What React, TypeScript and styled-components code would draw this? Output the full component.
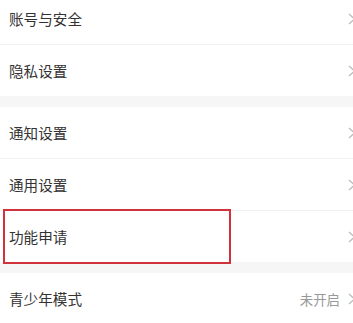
import React from "react";
import styled, { createGlobalStyle } from "styled-components";

const Global = createGlobalStyle`
  html, body { margin: 0; padding: 0; background: #ffffff; }
  body { overflow: hidden; font-family: "Noto Sans CJK SC", "Noto Sans", sans-serif; }
`;

const Page = styled.div`
  width: 353px;
  height: 323px;
  overflow: hidden;
  background: #ffffff;
  display: flex;
  flex-direction: column;
`;

const Group = styled.div<{ $offset?: number }>`
  display: flex;
  flex-direction: column;
  margin-top: ${(p) => p.$offset ?? 0}px;
`;

const Gap = styled.div`
  height: 11px;
  background: #f6f6f6;
  flex: none;
`;

const Row = styled.div<{ $last?: boolean; $highlight?: boolean }>`
  position: relative;
  height: 51px;
  flex: none;
  display: flex;
  align-items: center;
  padding-left: 9px;
  border-bottom: ${(p) => (p.$last ? "none" : "1px solid #f1f1f1")};
  ${(p) =>
    p.$highlight
      ? `&::after {
          content: "";
          position: absolute;
          left: 3px;
          top: -2px;
          width: 224px;
          height: 51px;
          border: 2px solid #d2323c;
          pointer-events: none;
        }`
      : ""}
`;

const Label = styled.span`
  font-size: 14.6px;
  color: #333333;
  letter-spacing: 0;
  flex: 1;
`;

const Value = styled.span`
  font-size: 13.4px;
  color: #999999;
  margin-right: 8px;
`;

const Chevron = styled.svg`
  flex: none;
  width: 8px;
  height: 12px;
  margin-right: -3px;
`;

const Arrow = () => (
  <Chevron viewBox="0 0 8 12">
    <path d="M1 1 L6.5 6 L1 11" fill="none" stroke="#bbbbbb" strokeWidth="1.3" />
  </Chevron>
);

type Item = { label: string; value?: string; highlight?: boolean };

const groups: Item[][] = [
  [{ label: "账号与安全" }, { label: "隐私设置" }],
  [{ label: "通知设置" }, { label: "通用设置" }, { label: "功能申请", highlight: true }],
  [{ label: "青少年模式", value: "未开启" }],
];

export default function App() {
  return (
    <Page>
      <Global />
      {groups.map((g, gi) => (
        <React.Fragment key={gi}>
          {gi > 0 && <Gap />}
          <Group $offset={gi === 0 ? -7 : 0}>
            {g.map((it, i) => (
              <Row key={it.label} $last={i === g.length - 1} $highlight={it.highlight}>
                <Label>{it.label}</Label>
                {it.value && <Value>{it.value}</Value>}
                <Arrow />
              </Row>
            ))}
          </Group>
        </React.Fragment>
      ))}
    </Page>
  );
}
